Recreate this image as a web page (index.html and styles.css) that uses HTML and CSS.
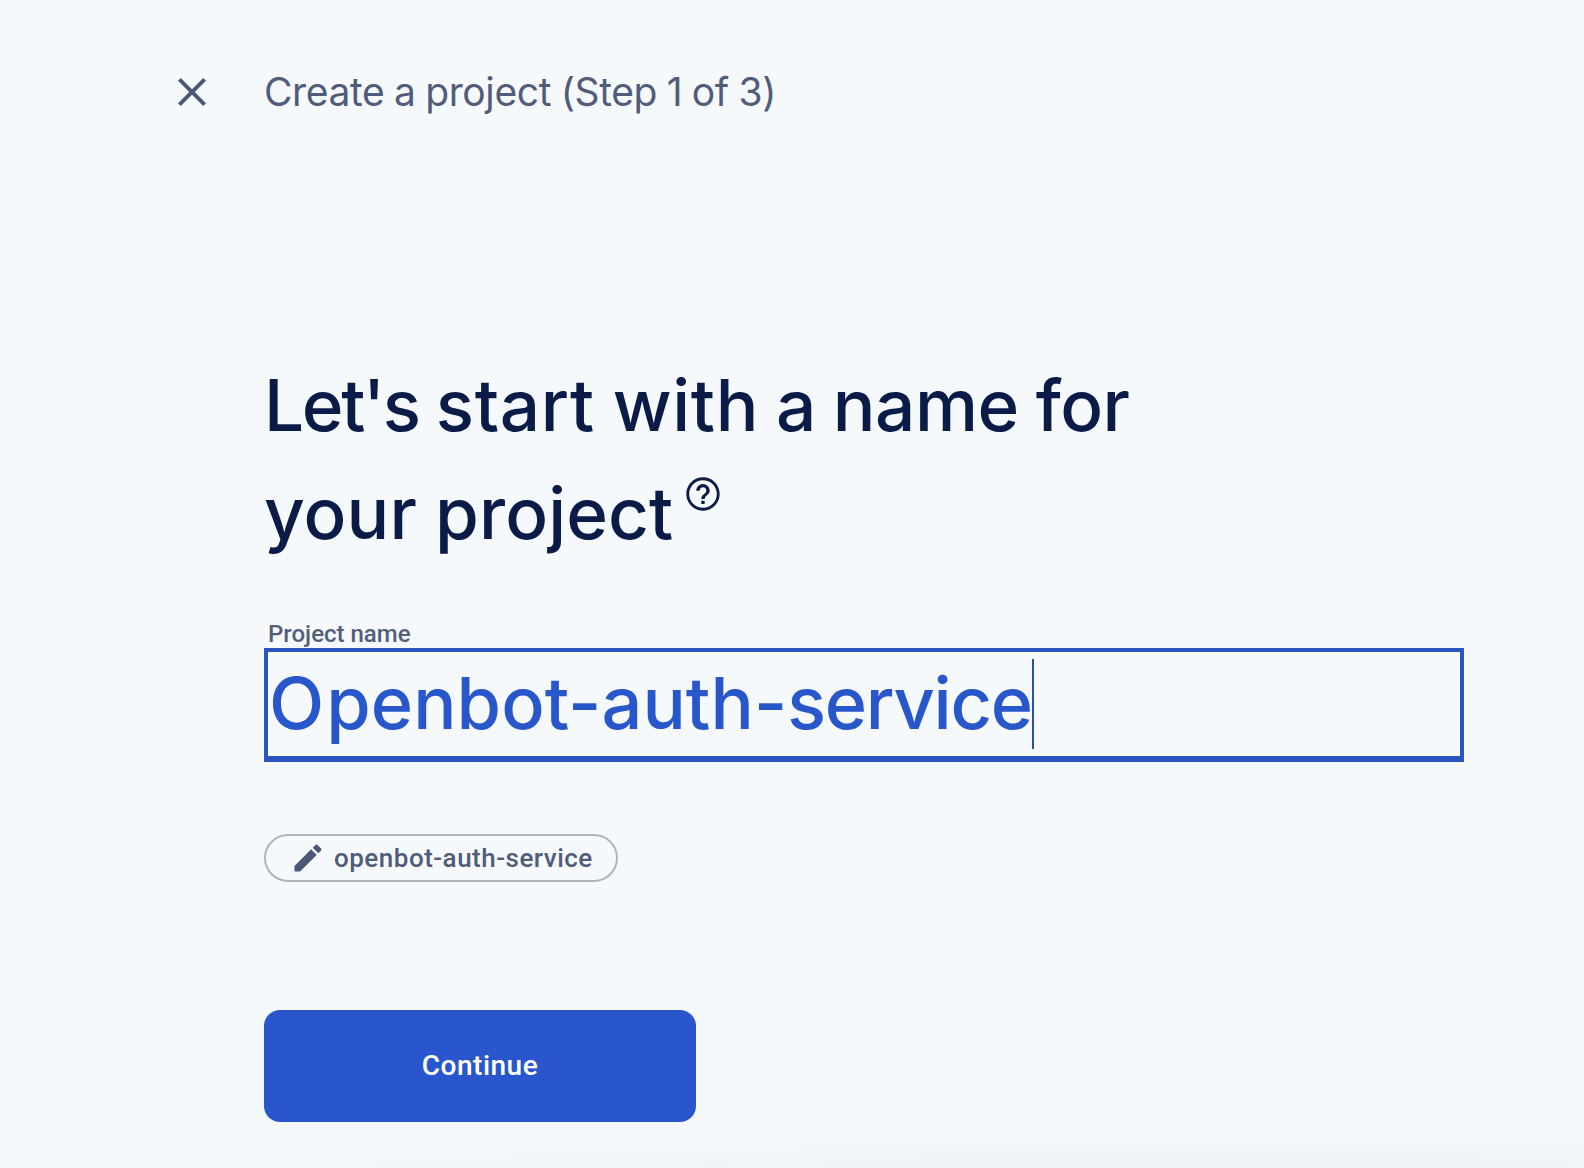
FILE: index.html
```
<!DOCTYPE html>
<html lang="en">
<head>
<meta charset="utf-8">
<title>Create a project</title>
<link rel="stylesheet" href="styles.css">
</head>
<body>
<div class="page">
  <header class="topbar">
    <svg class="close" viewBox="0 0 24 24" role="img" aria-label="Close"><path d="M19 6.41 17.59 5 12 10.59 6.41 5 5 6.41 10.59 12 5 17.59 6.41 19 12 13.41 17.59 19 19 17.59 13.41 12z"/></svg>
    <span class="step">Create a project (Step 1 of 3)</span>
  </header>
  <main class="content">
    <h1 class="title">
      <span class="line"><span class="tight">Let's</span> <span class="loose">start with</span> a name for</span>
      <span class="line line-last">your project<svg class="help" viewBox="0 0 24 24" role="img" aria-label="Help"><path d="M11 18h2v-2h-2v2zm1-16C6.48 2 2 6.48 2 12s4.480 10 10 10 10-4.480 10-10S17.520 2 12 2zm0 18.300c-4.580 0-8.300-3.720-8.300-8.300s3.720-8.300 8.300-8.300 8.300 3.720 8.300 8.300-3.720 8.300-8.300 8.300zm0-14.300c-2.210 0-4 1.790-4 4h2c0-1.100.9-2 2-2s2 .9 2 2c0 2-3 1.750-3 5h2c0-2.250 3-2.500 3-5 0-2.210-1.790-4-4-4z"/></svg></span>
    </h1>
    <div class="label">Project name</div>
    <div class="field"><span class="value"><span class="initial">O</span>penbot-auth-<span class="tail">service</span></span><span class="caret"></span></div>
    <div class="chip">
      <svg class="pencil" viewBox="0 0 24 24"><path d="M3 17.250V21h3.750L17.810 9.940l-3.750-3.750L3 17.250zM20.710 7.040a1 1 0 0 0 0-1.410l-2.340-2.340a1 1 0 0 0-1.410 0l-1.830 1.830 3.750 3.750 1.830-1.830z"/></svg>
      <span class="chip-text">openbot-auth-service</span>
    </div>
    <button class="continue">Continue</button>
  </main>
</div>
</body>
</html>
```
FILE: styles.css
```
* { box-sizing: border-box; }
body { margin: 0; }
.page {
  height: 1168px;
  overflow: hidden;
  padding: 60px 120px 0 168px;
  background:
    radial-gradient(ellipse 1250px 46px at 1200px 1178px, #eff3f6 30%, rgba(239, 243, 246, 0)) no-repeat,
    #f6f9fc;
}
.topbar {
  display: flex;
  align-items: center;
  height: 64px;
  gap: 48px;
}
.close { width: 48px; height: 48px; fill: #4c5876; }
.step {
  font: 400 39px/64px Inter, sans-serif;
  letter-spacing: -0.37px;
  word-spacing: -1px;
  color: #505c7a;
  white-space: nowrap;
}
.content {
  display: flex;
  flex-direction: column;
  align-items: flex-start;
  margin-left: 96px;
  padding-top: 227px;
}
.title {
  margin: 0;
  font: 500 71px/108px Inter, sans-serif;
  color: #0b1b47;
}
.line {
  display: block;
  white-space: nowrap;
  letter-spacing: -0.5px;
  word-spacing: -1.4px;
}
.tight { letter-spacing: -2.3px; }
.loose { letter-spacing: 0.6px; }
.line-last {
  display: flex;
  letter-spacing: 0.1px;
  word-spacing: -1px;
}
.help { width: 40px; height: 40px; margin: 15px 0 0 10px; fill: #0b1b47; }
.label {
  margin-top: 52px;
  padding-left: 4px;
  font: 500 24px/30px Roboto, sans-serif;
  color: #535f7a;
}
.field {
  display: flex;
  align-items: center;
  width: 1200px;
  height: 114px;
  margin-top: -1px;
  padding-left: 1px;
  border: 4px solid #2a55c0;
  border-bottom-width: 6px;
}
.value {
  margin-top: -3px;
  font: 500 72px/104px Inter, sans-serif;
  letter-spacing: 0.1px;
  color: #2856cb;
}
.initial { letter-spacing: 2px; }
.tail { letter-spacing: -1.3px; }
.caret { width: 2px; height: 90px; margin-top: -1px; background: #2a50a8; }
.chip {
  display: flex;
  align-items: center;
  gap: 11px;
  width: 354px;
  height: 48px;
  margin-top: 72px;
  padding-left: 24px;
  border: 2px solid #b0b4ba;
  border-radius: 24px;
}
.pencil { width: 36px; height: 36px; fill: #4c5876; }
.chip-text {
  margin-left: -3px;
  font: 500 26px/44px Roboto, sans-serif;
  letter-spacing: 0.5px;
  color: #505c7a;
}
.continue {
  width: 432px;
  height: 112px;
  margin-top: 128px;
  padding: 0;
  border: 0;
  border-radius: 16px;
  background: #2956cc;
  font: 500 28px/112px Roboto, sans-serif;
  letter-spacing: 0.5px;
  color: #fff;
}
```
